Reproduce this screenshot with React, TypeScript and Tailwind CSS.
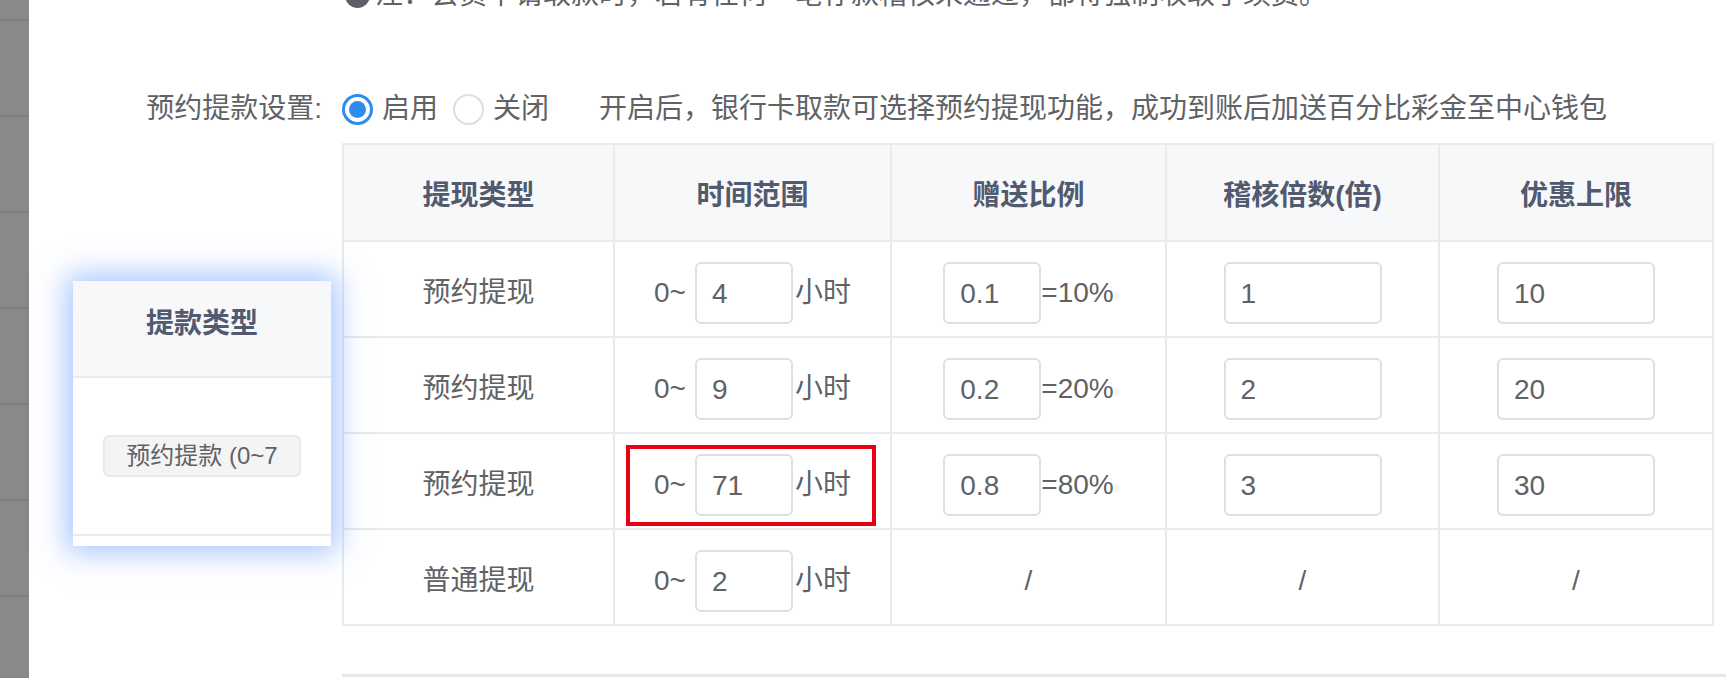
import React from "react";

const B = "border-[#e8eaec]";

function Box({ value, wide }: { value: string; wide?: boolean }) {
  return (
    <div
      className={
        (wide ? "w-[158px]" : "w-[98px]") +
        " flex h-[62px] shrink-0 items-center rounded-[6px] border-2 border-[#dcdfe6] bg-white pl-[15px] pt-[3px] text-[28px] leading-[32px] text-[#606266]"
      }
    >
      {value}
    </div>
  );
}

function HeadCell({ children }: { children: React.ReactNode }) {
  return (
    <div className="flex h-[97px] items-center justify-center border-r-2 border-b-2 border-[#e8eaec] bg-[#f7f8fa] pt-[6px] text-[28px] font-bold leading-[36px] text-[#515a6e]">
      {children}
    </div>
  );
}

function Cell({ children, extra }: { children: React.ReactNode; extra?: React.ReactNode }) {
  return (
    <div className="relative flex h-[96px] items-center justify-center border-r-2 border-b-2 border-[#e8eaec] bg-white pt-[7px] text-[28px] leading-[36px] text-[#606266]">
      {children}
      {extra}
    </div>
  );
}

function TimeRange({ v }: { v: string }) {
  return (
    <div className="flex items-center">
      <span>0~</span>
      <div className="ml-[9px]">
        <Box value={v} />
      </div>
      <span className="ml-[2px]">小时</span>
    </div>
  );
}

function Ratio({ v, pct }: { v: string; pct: string }) {
  return (
    <div className="flex items-center">
      <Box value={v} />
      <span>{pct}</span>
    </div>
  );
}

const rows = [
  { type: "预约提现", t: "4", r: "0.1", p: "=10%", m: "1", c: "10" },
  { type: "预约提现", t: "9", r: "0.2", p: "=20%", m: "2", c: "20" },
  { type: "预约提现", t: "71", r: "0.8", p: "=80%", m: "3", c: "30", red: true },
];

export default function App() {
  return (
    <div className="relative flex h-[678px] w-[1726px] overflow-hidden bg-white [font-family:'Liberation_Sans','Noto_Sans_CJK_SC',sans-serif]">
      {/* dimmed sidebar */}
      <div className="flex w-[29px] shrink-0 flex-col bg-[#898989]">
        <div className="h-[21px] shrink-0 border-b-2 border-[#7f7f7f]" />
        {[0, 1, 2, 3, 4, 5, 6].map((i) => (
          <div key={i} className="h-[96px] shrink-0 border-b-2 border-[#7f7f7f]" />
        ))}
      </div>

      <div className="flex min-w-0 flex-1 flex-col">
        {/* cut-off notice line */}
        <div className="-mt-[25px] flex h-[40px] shrink-0 items-center whitespace-nowrap pl-[316px] text-[28px] leading-[40px] text-[#5f6268]">
          <span className="mr-[5px] inline-block h-[25px] w-[25px] rounded-full bg-[#5c5f66]" />
          <span>注：会员申请取款时，若有任何一笔存款稽核未通过，都将强制收取手续费。</span>
        </div>

        {/* radio row */}
        <div className="mt-[74px] flex h-[40px] shrink-0 items-center whitespace-nowrap text-[28px] leading-[40px] text-[#606266]">
          <div className="w-[313px] shrink-0 pr-[20px] text-right">预约提款设置:</div>
          <span className="flex h-[31px] w-[31px] items-center justify-center rounded-full border-[3px] border-[#2d8cf0] bg-white">
            <span className="h-[17px] w-[17px] rounded-full bg-[#2d8cf0]" />
          </span>
          <span className="ml-[9px]">启用</span>
          <span className="ml-[15px] h-[31px] w-[31px] rounded-full border-2 border-[#dcdee2] bg-white" />
          <span className="ml-[9px]">关闭</span>
          <span className="ml-[50px]">开启后，银行卡取款可选择预约提现功能，成功到账后加送百分比彩金至中心钱包</span>
        </div>

        {/* table */}
        <div className={"ml-[313px] mt-[14px] grid w-fit grid-cols-[271px_277px_275px_273px_274px] border-l-2 border-t-2 " + B}>
          <HeadCell>提现类型</HeadCell>
          <HeadCell>时间范围</HeadCell>
          <HeadCell>赠送比例</HeadCell>
          <HeadCell>稽核倍数(倍)</HeadCell>
          <HeadCell>优惠上限</HeadCell>

          {rows.map((r, i) => (
            <React.Fragment key={i}>
              <Cell>{r.type}</Cell>
              <Cell
                extra={
                  r.red ? (
                    <div className="absolute left-[11px] top-[11px] h-[81px] w-[250px] border-4 border-[#e60012]" />
                  ) : null
                }
              >
                <TimeRange v={r.t} />
              </Cell>
              <Cell>
                <Ratio v={r.r} pct={r.p} />
              </Cell>
              <Cell>
                <Box value={r.m} wide />
              </Cell>
              <Cell>
                <Box value={r.c} wide />
              </Cell>
            </React.Fragment>
          ))}

          <Cell>普通提现</Cell>
          <Cell>
            <TimeRange v="2" />
          </Cell>
          <Cell>/</Cell>
          <Cell>/</Cell>
          <Cell>/</Cell>
        </div>

        <div className="ml-[313px] mt-[48px] h-[3px] shrink-0 bg-[#e4e7ed]" />
      </div>

      {/* dragged column preview */}
      <div className="absolute left-[73px] top-[281px] flex w-[258px] flex-col bg-white shadow-[0_0_28px_6px_rgba(90,145,255,0.55)]">
        <div className="flex h-[97px] items-center justify-center border-b-2 border-[#e8eaec] bg-[#f7f8fa] pb-[10px] text-[28px] font-bold leading-[36px] text-[#515a6e]">
          提款类型
        </div>
        <div className="flex h-[158px] items-center justify-center border-b-2 border-[#e8eaec]">
          <div className="flex h-[42px] w-[198px] items-center justify-center overflow-hidden whitespace-nowrap rounded-[6px] border-2 border-[#e9e9eb] bg-[#f4f4f5] text-[24px] leading-[30px] text-[#606266]">
            预约提款 (0~7
          </div>
        </div>
        <div className="h-[10px]" />
      </div>
    </div>
  );
}
